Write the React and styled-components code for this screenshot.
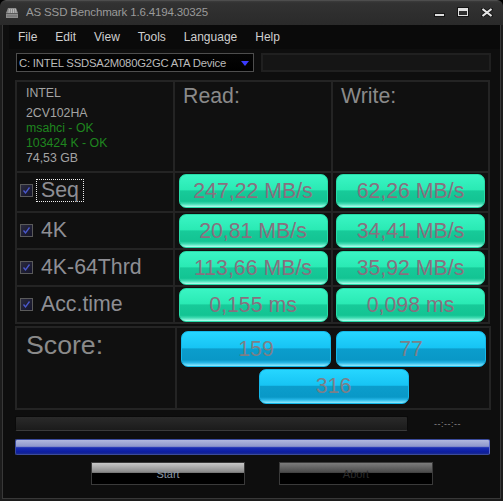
import React from "react";
import styled, { createGlobalStyle } from "styled-components";

const GlobalStyle = createGlobalStyle`
  html, body {
    margin: 0;
    padding: 0;
    background: #000;
  }
  * {
    box-sizing: border-box;
  }
`;

const results = [
  { label: "Seq", read: "247,22 MB/s", write: "62,26 MB/s", focused: true, tall: true },
  { label: "4K", read: "20,81 MB/s", write: "34,41 MB/s" },
  { label: "4K-64Thrd", read: "113,66 MB/s", write: "35,92 MB/s" },
  { label: "Acc.time", read: "0,155 ms", write: "0,098 ms" },
];

const menuItems = ["File", "Edit", "View", "Tools", "Language", "Help"];

export default function App() {
  return (
    <>
      <GlobalStyle />
      <Window>
        <TitleBar>
          <TitleLeft>
            <DriveIcon />
            <TitleText>AS SSD Benchmark 1.6.4194.30325</TitleText>
          </TitleLeft>
          <Controls>
            <ControlButton>
              <MinGlyph />
            </ControlButton>
            <ControlButton>
              <MaxGlyph />
            </ControlButton>
            <ControlButton>
              <svg width="12" height="9" viewBox="0 0 12 9">
                <path
                  d="M1.5 1 L10.5 8 M10.5 1 L1.5 8"
                  stroke="#1a1a1a"
                  strokeWidth="4"
                  strokeLinecap="square"
                />
                <path
                  d="M1.5 1 L10.5 8 M10.5 1 L1.5 8"
                  stroke="#e6e6e6"
                  strokeWidth="2.2"
                />
              </svg>
            </ControlButton>
          </Controls>
        </TitleBar>

        <Body>
          <MenuBar>
            {menuItems.map(m => (
              <MenuItem key={m}>{m}</MenuItem>
            ))}
          </MenuBar>

          <DriveRow>
            <DriveSelect>
              <span>C: INTEL SSDSA2M080G2GC ATA Device</span>
              <Arrow />
            </DriveSelect>
            <InfoBox />
          </DriveRow>

          <ResultTable>
            <InfoCell>
              <InfoLine $first>INTEL</InfoLine>
              <InfoLine>2CV102HA</InfoLine>
              <InfoLine $ok>msahci - OK</InfoLine>
              <InfoLine $ok>103424 K - OK</InfoLine>
              <InfoLine>74,53 GB</InfoLine>
            </InfoCell>
            <HeadCell>Read:</HeadCell>
            <HeadCell>Write:</HeadCell>

            {results.map(r => (
              <React.Fragment key={r.label}>
                <LabelCell $tall={r.tall}>
                  <CheckBox>
                    <svg width="9" height="9" viewBox="0 0 9 9">
                      <path
                        d="M1.5 4.5 L3.5 7 L7.5 1.5"
                        fill="none"
                        stroke="#4a58cc"
                        strokeWidth="1.3"
                      />
                    </svg>
                  </CheckBox>
                  <RowLabel $focused={r.focused}>{r.label}</RowLabel>
                </LabelCell>
                <ValueCell>
                  <Pill>{r.read}</Pill>
                </ValueCell>
                <ValueCell>
                  <Pill>{r.write}</Pill>
                </ValueCell>
              </React.Fragment>
            ))}
          </ResultTable>

          <ScoreTable>
            <ScoreLabel>Score:</ScoreLabel>
            <ScoreCell>
              <ScorePill>159</ScorePill>
              <ScorePill>77</ScorePill>
              <ScorePill $total>316</ScorePill>
            </ScoreCell>
          </ScoreTable>

          <ProgressRow>
            <Track />
            <Timer>--:--:--</Timer>
          </ProgressRow>

          <BlueBar />

          <ButtonRow>
            <ActionButton>Start</ActionButton>
            <ActionButton $disabled>Abort</ActionButton>
          </ButtonRow>
        </Body>
      </Window>
    </>
  );
}

function DriveIcon() {
  return (
    <svg width="14" height="13" viewBox="0 0 14 13" style={{ marginRight: 7 }}>
      <path d="M1 12 L1 7 L3 2 L11 2 L13 7 L13 12 Z" fill="#8c8c8c" />
      <path d="M1 7.5 L13 7.5" stroke="#5a5a5a" strokeWidth="1" />
      <path
        d="M4.5 3 L4 7 M6.5 3 L6.5 7 M8.5 3 L8.5 7 M10.5 3 L11 7"
        stroke="#bdbdbd"
        strokeWidth="0.9"
      />
      <path d="M2 10 L12 10" stroke="#6c6c6c" strokeWidth="1" />
    </svg>
  );
}

const Window = styled.div`
  width: 503px;
  height: 501px;
  display: flex;
  flex-direction: column;
  background: #1c1c1c;
  border-radius: 6px 6px 0 0;
  padding: 0 2px 2px;
  overflow: hidden;
  font-family: "Liberation Sans", Arial, sans-serif;
`;

const TitleBar = styled.div`
  height: 25px;
  flex: none;
  margin: 0 -2px;
  display: flex;
  align-items: center;
  justify-content: space-between;
  padding: 0 4px 0 5px;
  background: linear-gradient(#5e5e5e 0, #3c3c3c 1px, #323232 3px, #2a2a2a 100%);
  border-radius: 6px 6px 0 0;
`;

const TitleLeft = styled.div`
  display: flex;
  align-items: center;
  margin-top: -1px;
`;

const TitleText = styled.span`
  font-size: 11.5px;
  letter-spacing: -0.15px;
  color: #9a9a9a;
`;

const Controls = styled.div`
  display: flex;
  align-items: center;
  margin-top: -1px;
`;

const ControlButton = styled.div`
  width: 24px;
  height: 16px;
  display: flex;
  align-items: center;
  justify-content: center;
`;

const MinGlyph = styled.div`
  width: 11px;
  height: 4px;
  margin-top: 6px;
  background: #dcdcdc;
  border: 1px solid #151515;
`;

const MaxGlyph = styled.div`
  width: 10px;
  height: 8px;
  border: 1px solid #e0e0e0;
  border-top-width: 3px;
  box-shadow: 0 0 0 1px #151515;
`;

const Body = styled.div`
  flex: 1;
  display: flex;
  flex-direction: column;
  background: #0e0e0e;
  border: 1px solid #383838;
  border-top: none;
  padding-left: 12px;
`;

const MenuBar = styled.div`
  height: 24px;
  display: flex;
  align-items: center;
  margin-left: -6px;
  background: #0a0a0a;
`;

const MenuItem = styled.span`
  font-size: 12px;
  color: #cfcfcf;
  padding: 0 9px;
`;

const DriveRow = styled.div`
  display: flex;
  gap: 7px;
  margin-top: 4px;
  height: 19px;
`;

const DriveSelect = styled.div`
  width: 238px;
  margin-left: 1px;
  display: flex;
  align-items: center;
  justify-content: space-between;
  padding: 0 4px 0 2px;
  border: 1px solid #4e4e4e;
  background: linear-gradient(#050505, #000);
  font-size: 11.3px;
  letter-spacing: -0.2px;
  color: #bababa;
  white-space: nowrap;
`;

const Arrow = styled.div`
  width: 0;
  height: 0;
  border-left: 4px solid transparent;
  border-right: 4px solid transparent;
  border-top: 5px solid #3b3bff;
  margin-top: 1px;
`;

const InfoBox = styled.div`
  width: 230px;
  border: 2px solid #202020;
  background: #151515;
`;

const ResultTable = styled.div`
  margin-top: 8px;
  width: 475px;
  display: grid;
  grid-template-columns: 156px 156px 155px;
  grid-template-rows: 89px 38px 35px 35px 35px;
  gap: 2px;
  padding: 2px;
  background: #242424;
`;

const Cell = styled.div`
  background: #101010;
`;

const InfoCell = styled(Cell)`
  padding: 4px 9px 0;
  display: flex;
  flex-direction: column;
`;

const InfoLine = styled.div`
  font-size: 12.3px;
  line-height: 15px;
  color: ${p => (p.$ok ? "#1f861f" : "#a4a4a4")};
  margin-bottom: ${p => (p.$first ? "5px" : "0")};
`;

const HeadCell = styled(Cell)`
  padding: 2px 8px 0;
  font-size: 21.3px;
  line-height: 24px;
  color: #8a8a8a;
`;

const LabelCell = styled(Cell)`
  display: flex;
  align-items: center;
  padding: 0 0 ${p => (p.$tall ? "4px" : "0")} 3px;
`;

const CheckBox = styled.div`
  width: 13px;
  height: 13px;
  flex: none;
  display: flex;
  align-items: center;
  justify-content: center;
  border: 1px solid #5a5a5a;
  background: linear-gradient(135deg, #2a2a3e, #14142a);
`;

const RowLabel = styled.span`
  margin-left: 3px;
  padding: 0 4px;
  height: 23px;
  display: flex;
  align-items: center;
  border: 1px dotted ${p => (p.$focused ? "#f0f0f0" : "transparent")};
  font-size: 21.3px;
  color: #8e8e94;
`;

const ValueCell = styled(Cell)`
  display: flex;
  justify-content: center;
  padding-top: 1px;
`;

const Pill = styled.div`
  width: 149px;
  height: 34px;
  display: flex;
  align-items: center;
  justify-content: center;
  border-radius: 7px;
  border: 1px solid #27dca8;
  background: linear-gradient(
    #3af5c4 0%,
    #2aeab4 46%,
    #17ca99 50%,
    #13c493 82%,
    #3fdcb2 90%,
    #b4fff0 100%
  );
  font-size: 21.3px;
  color: #88707f;
`;

const ScoreTable = styled.div`
  margin-top: 2px;
  width: 476px;
  display: grid;
  grid-template-columns: 158px 312px;
  grid-template-rows: 80px;
  gap: 2px;
  padding: 2px;
  background: #242424;
`;

const ScoreLabel = styled(Cell)`
  padding: 2px 9px 0;
  font-size: 26.7px;
  line-height: 30px;
  color: #8a8a8a;
`;

const ScoreCell = styled(Cell)`
  display: grid;
  grid-template-columns: 150px 150px;
  grid-auto-rows: min-content;
  column-gap: 5px;
  row-gap: 2px;
  padding: 3px 0 0 4px;
`;

const ScorePill = styled.div`
  width: 150px;
  height: ${p => (p.$total ? "35px" : "36px")};
  grid-column: ${p => (p.$total ? "1 / span 2" : "auto")};
  justify-self: center;
  display: flex;
  align-items: center;
  justify-content: center;
  border-radius: 7px;
  border: 1px solid #14b8ea;
  background: linear-gradient(
    #26d6ff 0%,
    #17c4f4 46%,
    #0b9dcc 50%,
    #0998c7 82%,
    #26b6e6 90%,
    #93ebff 100%
  );
  font-size: 21.3px;
  color: #7c7f87;
`;

const ProgressRow = styled.div`
  margin-top: 6px;
  display: flex;
  align-items: center;
  height: 15px;
`;

const Track = styled.div`
  width: 393px;
  height: 15px;
  border-radius: 2px;
  border: 1px solid #0a0a0a;
  border-bottom-color: #3a3a3a;
  background: linear-gradient(#2a2a2a, #1b1b1b);
`;

const Timer = styled.span`
  margin-left: 26px;
  font-size: 9px;
  letter-spacing: 0.5px;
  color: #8a8a8a;
`;

const BlueBar = styled.div`
  margin-top: 8px;
  width: 475px;
  height: 16px;
  border-radius: 2px;
  border: 1px solid #3a4a9a;
  border-right-color: #5a6ac8;
  background: linear-gradient(
    #b0b8de 0%,
    #8e98cc 45%,
    #1a2eb4 55%,
    #0c1d9f 85%,
    #1a2a90 100%
  );
`;

const ButtonRow = styled.div`
  margin-top: 7px;
  display: flex;
  gap: 34px;
  padding-left: 76px;
`;

const ActionButton = styled.div`
  width: 154px;
  height: 23px;
  display: flex;
  align-items: center;
  justify-content: center;
  border: 1px solid #3a3a3a;
  background: ${p =>
    p.$disabled
      ? "linear-gradient(#7c7c7c 0%, #4c4c4c 42%, #3a3a3a 48%, #000 50%, #000 100%)"
      : "linear-gradient(#c8c8c8 0%, #8e8e8e 40%, #6c6c6c 48%, #000 50%, #000 100%)"};
  font-size: 11px;
  color: ${p => (p.$disabled ? "#2c2c2c" : "#8a98a6")};
`;
